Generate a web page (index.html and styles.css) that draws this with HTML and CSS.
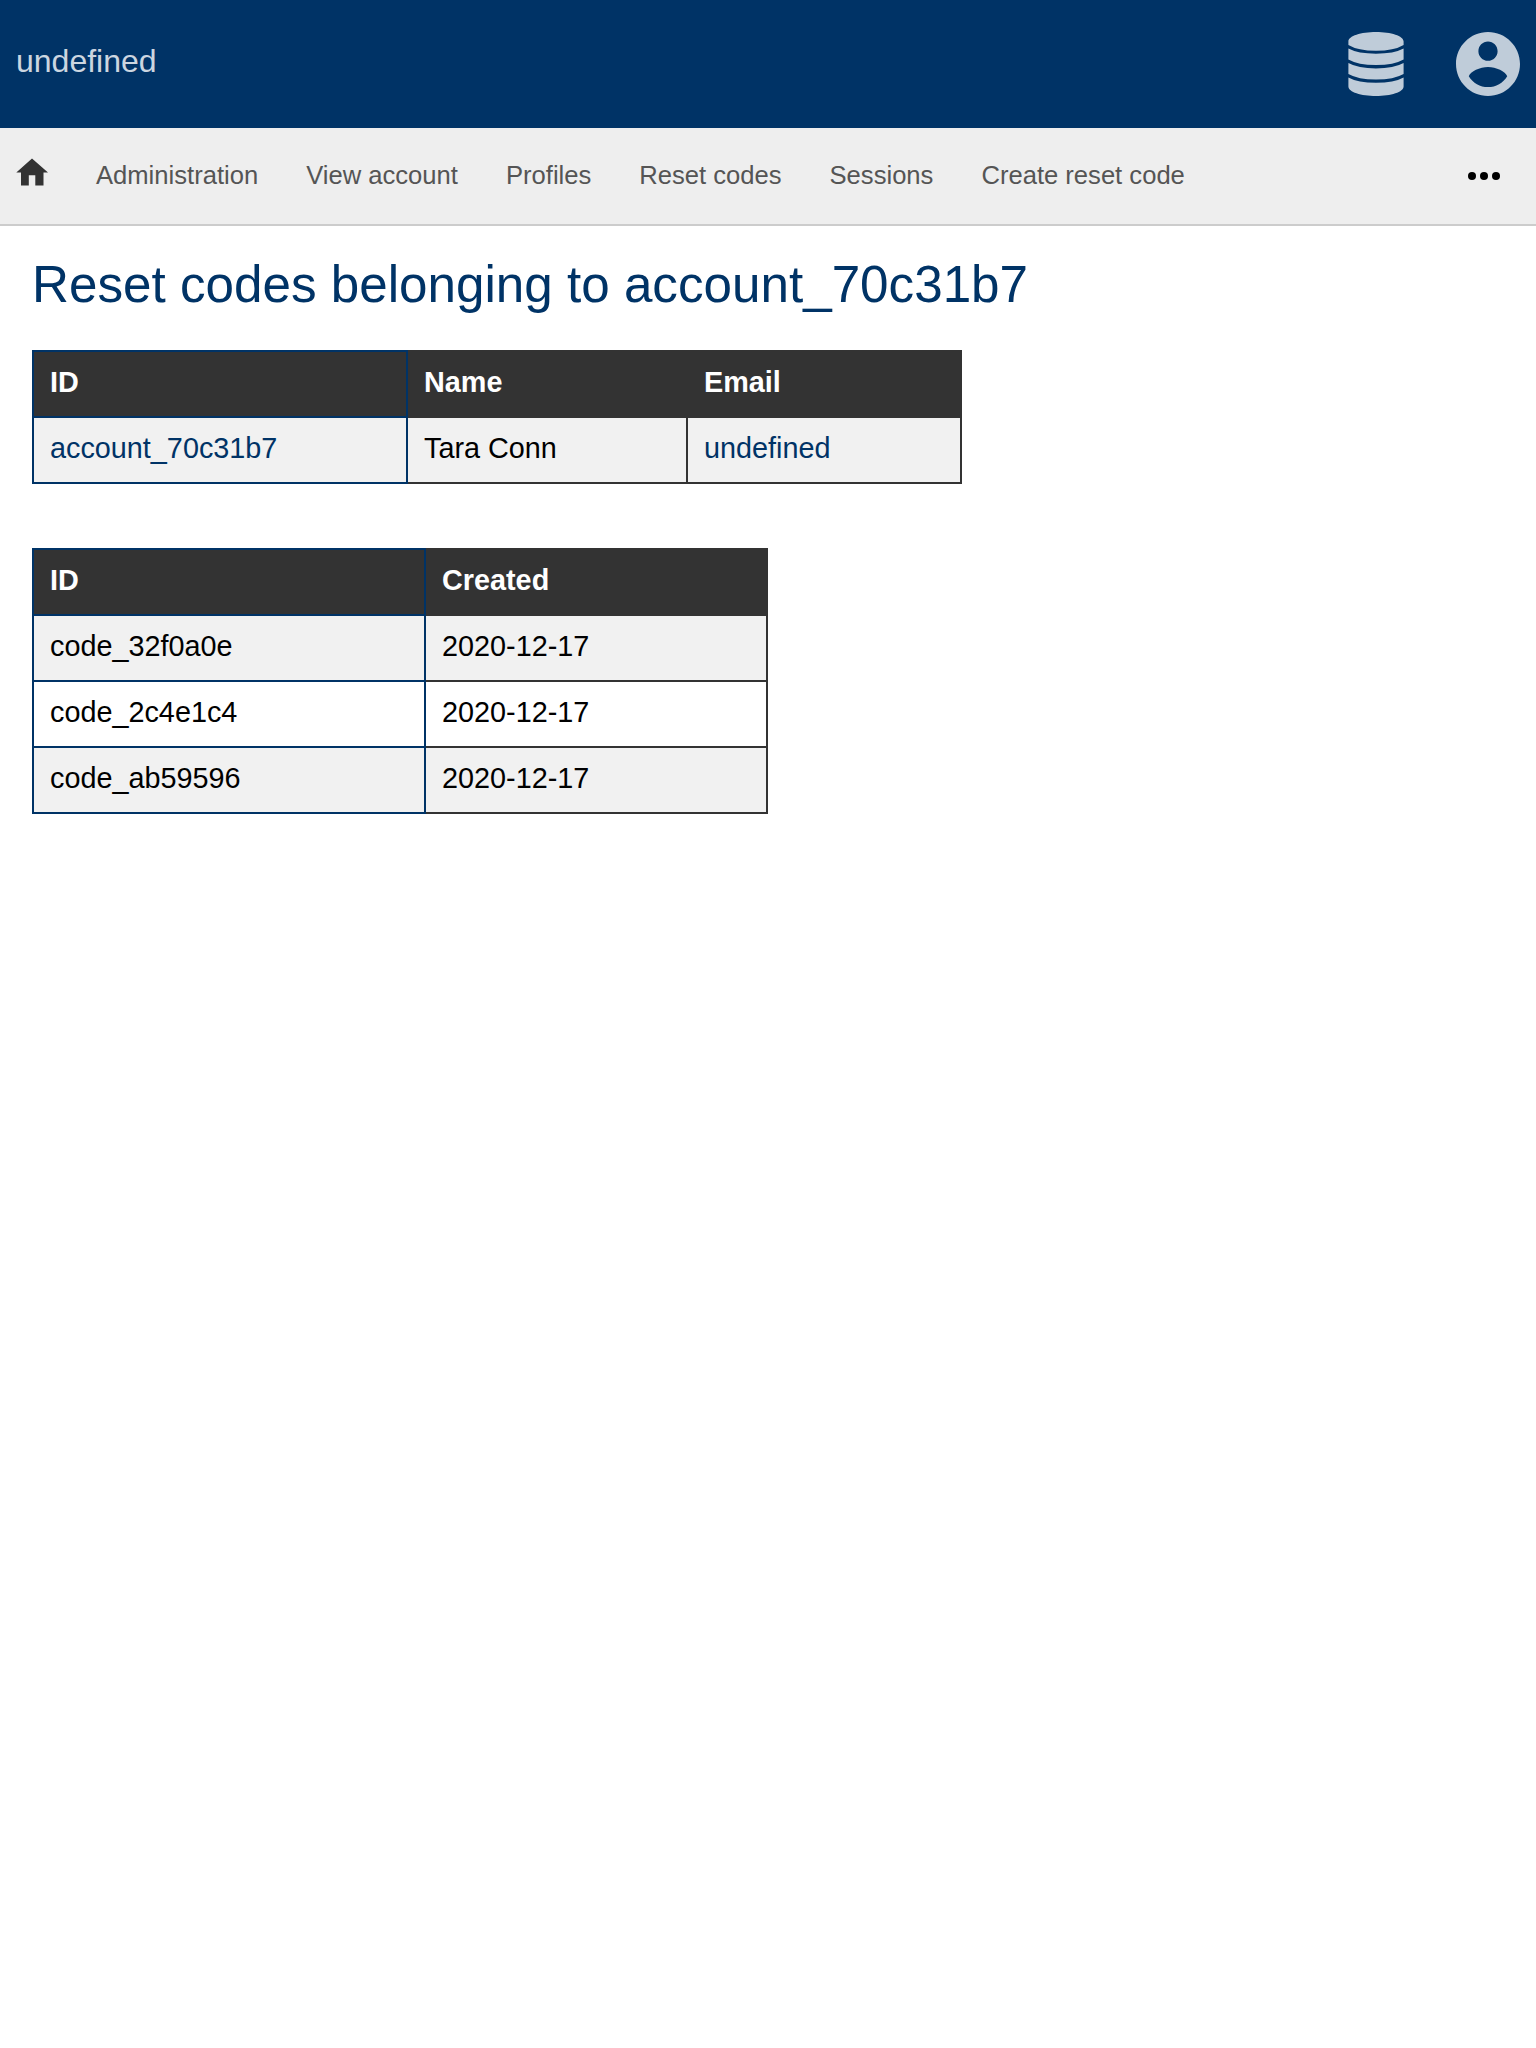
FILE: index.html
```html
<!DOCTYPE html>
<html lang="en">
<head>
<meta charset="utf-8">
<title>Reset codes</title>
<link rel="stylesheet" href="styles.css">
</head>
<body>
<header class="header">
  <h1 class="brand">undefined</h1>
  <div class="menus">
    <svg class="icon-database" viewBox="0 0 56 64"><path d="M.4 9.500C.4 4 13 0 28 0S55.600 4 55.600 9.500V13Q46 18.800 28 18.800T.4 13ZM.4 16.600Q10 21.800 28 21.800T55.600 16.600V27.500Q46 33 28 33T.4 27.500ZM.4 31Q10 36.400 28 36.400T55.600 31V42Q46 47.500 28 47.500T.4 42ZM.4 45.400Q10 50.800 28 50.800T55.600 45.400V54.500C55.600 60 43 64 28 64S.4 60 .4 54.500Z"/></svg>
    <svg class="icon-account" viewBox="2 2 20 20"><path d="M12 2C6.480 2 2 6.480 2 12s4.480 10 10 10 10-4.480 10-10S17.520 2 12 2zm0 3c1.660 0 3 1.340 3 3s-1.340 3-3 3-3-1.340-3-3 1.340-3 3-3zm0 14.200c-2.500 0-4.710-1.280-6-3.400.5-1.500 3.500-2.900 6-2.900s5.500 1.400 6 2.900c-1.290 2.120-3.500 3.400-6 3.400z"/></svg>
  </div>
</header>
<nav class="nav">
  <a class="home"><svg class="icon-home" viewBox="0 0 32 28"><path d="M16 .5L32 14.500H27.500V27.500H19.300V17.300H12.800V27.500H5V14.500H.3Z"/></svg></a>
  <a class="item">Administration</a>
  <a class="item">View account</a>
  <a class="item">Profiles</a>
  <a class="item">Reset codes</a>
  <a class="item">Sessions</a>
  <a class="item">Create reset code</a>
  <svg class="icon-more" viewBox="0 0 32 8"><circle cx="4" cy="4" r="4"/><circle cx="16" cy="4" r="4"/><circle cx="28" cy="4" r="4"/></svg>
</nav>
<main class="content">
  <h2 class="title">Reset codes belonging to account_70c31b7</h2>
  <table class="table account-table">
    <colgroup><col class="account-id"><col class="account-name"><col></colgroup>
    <thead><tr><th>ID</th><th>Name</th><th>Email</th></tr></thead>
    <tbody><tr><td><a class="link">account_70c31b7</a></td><td>Tara Conn</td><td><a class="link">undefined</a></td></tr></tbody>
  </table>
  <table class="table codes-table">
    <colgroup><col class="code-id"><col></colgroup>
    <thead><tr><th>ID</th><th>Created</th></tr></thead>
    <tbody>
      <tr><td>code_32f0a0e</td><td>2020-12-17</td></tr>
      <tr><td>code_2c4e1c4</td><td>2020-12-17</td></tr>
      <tr><td>code_ab59596</td><td>2020-12-17</td></tr>
    </tbody>
  </table>
</main>
</body>
</html>
```
FILE: styles.css
```css
* { box-sizing: border-box; }
body {
  margin: 0;
  background: #fff;
  color: #000;
  font-family: "Liberation Sans", Arial, sans-serif;
}
.header {
  display: flex;
  justify-content: space-between;
  height: 128px;
  padding: 32px 16px;
  background: #036;
}
.brand {
  margin: 0;
  padding-top: 9px;
  font-size: 32px;
  font-weight: 400;
  line-height: 40px;
  color: #ccd6e0;
}
.menus { display: flex; gap: 52px; fill: #bfccd9; }
.icon-database { width: 56px; height: 64px; }
.icon-account { width: 64px; height: 64px; }
.nav {
  display: flex;
  align-items: center;
  gap: 48px;
  height: 98px;
  padding: 0 36px 0 16px;
  border-bottom: 2px solid #ccc;
  background: #eee;
  color: #555;
  font-size: 25.6px;
  line-height: 32px;
}
.home { display: flex; padding-bottom: 8px; }
.item { padding-bottom: 2px; }
.icon-home { width: 32px; height: 28px; fill: #333; }
.icon-more { width: 32px; height: 8px; margin-left: auto; }
.content { padding: 27px 32px; }
.title {
  margin: 0 0 33px;
  color: #036;
  font-size: 51.2px;
  font-weight: 400;
  line-height: 64px;
}
.table {
  table-layout: fixed;
  border-collapse: collapse;
  font-size: 28.8px;
  line-height: 32px;
}
.account-table { width: 930px; margin-bottom: 64px; }
.codes-table { width: 736px; }
.account-id { width: 374px; }
.account-name { width: 280px; }
.code-id { width: 392px; }
.table th, .table td {
  height: 66px;
  padding: 14px 16px 18px;
  border: 2px solid #333;
  text-align: left;
}
.table th { background: #333; color: #fff; }
.table th:first-child, .table td:first-child { border-color: #036; }
.table tbody tr:nth-child(odd) { background: #f1f1f1; }
.link { color: #036; }
```
